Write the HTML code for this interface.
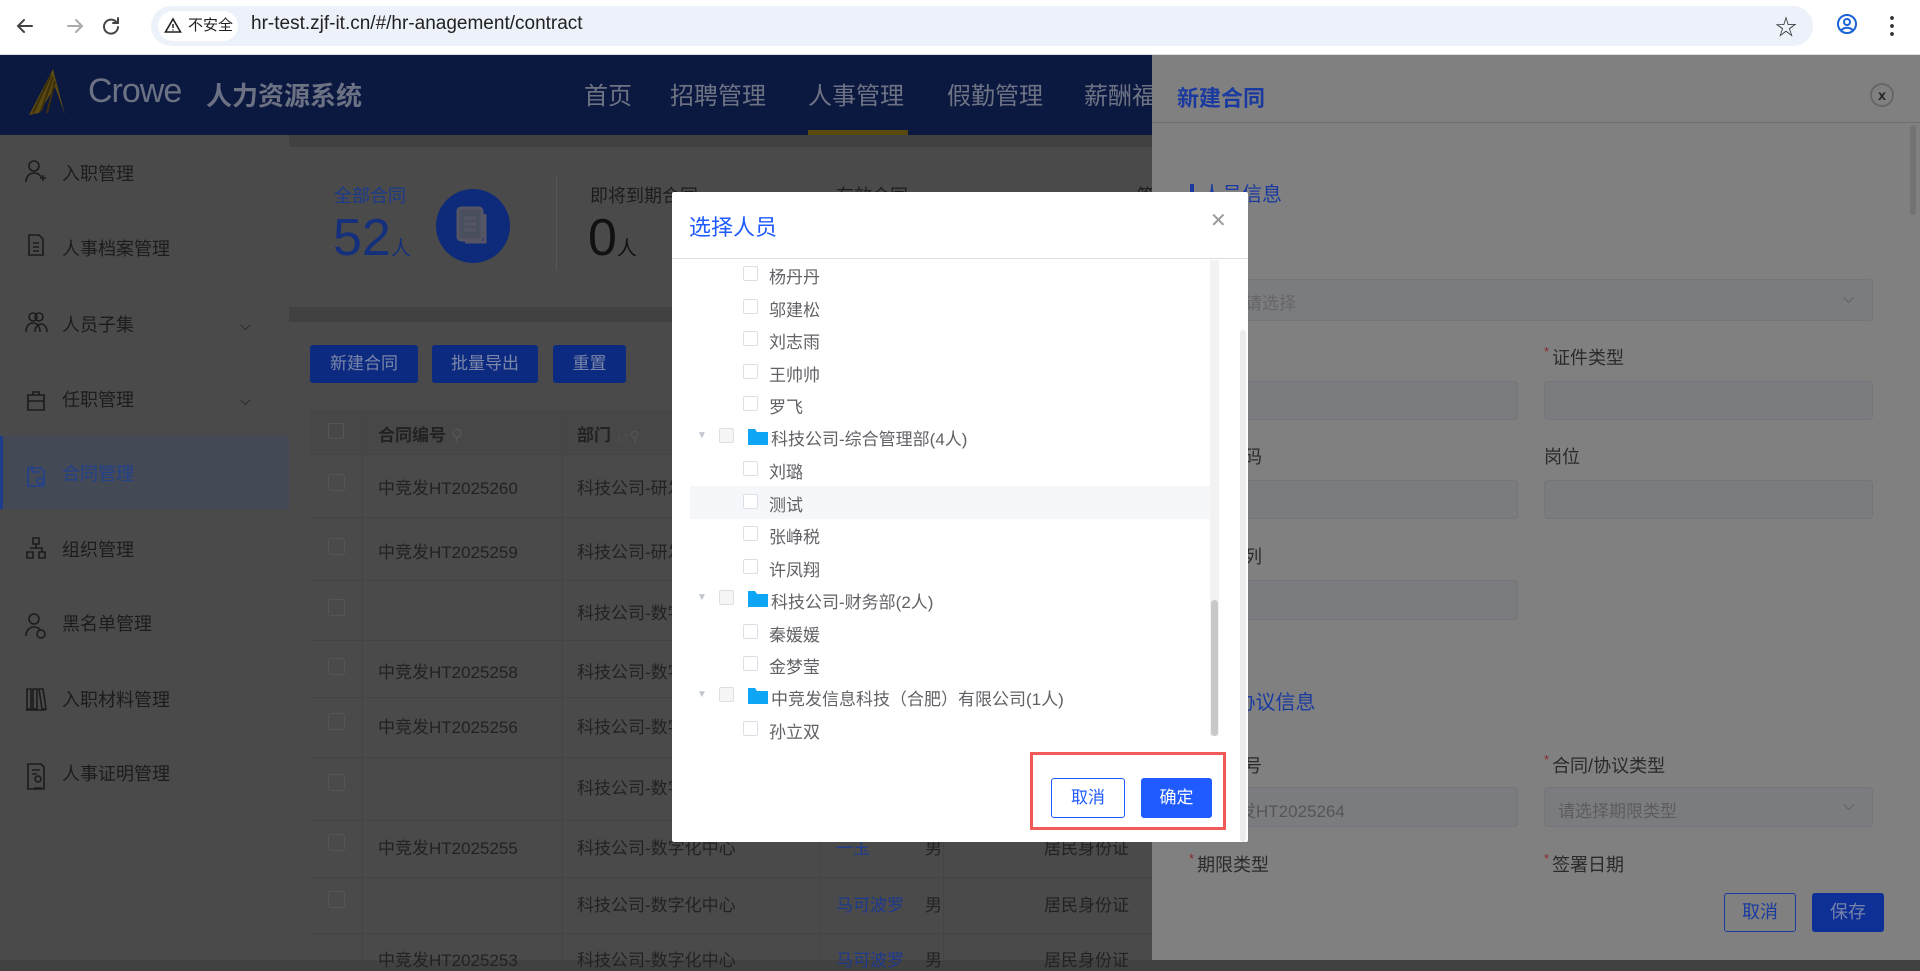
<!DOCTYPE html>
<html><head><meta charset="utf-8"><style>
*{margin:0;padding:0;box-sizing:border-box}
body{width:1920px;height:960px;overflow:hidden;position:relative;font-family:"Liberation Sans","Noto Sans CJK SC",sans-serif;background:#414141}
.a{position:absolute;white-space:nowrap}
.chrome{left:0;top:0;width:1920px;height:55px;background:#fff;border-bottom:1px solid #ddd}
.url{left:151px;top:6px;width:1662px;height:40px;background:#edf1f9;border-radius:20px}
.hdr{left:0;top:55px;width:1152px;height:80px;background:#0b1840}
.nav{top:76px;font-size:24px;color:#6e7384}
.side{left:0;top:135px;width:289px;height:825px;background:#4a4a4a}
.si{left:62px;font-size:18px;color:#1c1c1c}
.card{background:#4a4a4a}
.btn{top:345px;height:38px;background:#0c2a80;color:#7b86a8;font-size:17px;line-height:38px;text-align:center;border-radius:3px}
.td{font-size:17px;color:#222}
.rowl{left:310px;width:842px;height:1px;background:#444}
.drawer{left:1152px;top:55px;width:768px;height:905px;background:#808080}
.lbl{font-size:18px;color:#2a2a2a}
.inp{background:#7b7c7f;border:1px solid #747578;border-radius:4px}
.star{color:#8a2a2a;font-size:13px;margin-right:3px;vertical-align:top}
.dlg{left:672px;top:192px;width:576px;height:650px;background:#fff;border-radius:2px}
.tr{font-size:17px;color:#606266;left:97px}
.cb{width:15px;height:15px;border:1px solid #dcdfe6;border-radius:2px;background:#fff}
</style></head><body>
<div class="a chrome"></div>
<svg class="a" style="left:14px;top:14px" width="110" height="24" viewBox="0 0 110 24" fill="none" stroke-width="2" stroke-linecap="round">
<path d="M18 12H5M10 6L4 12l6 6" stroke="#444"/>
<path d="M54 12h13M62 6l6 6-6 6" stroke="#aaa"/>
<path d="M113 9a7 7 0 1 0 1 4" stroke="#444" transform="translate(-10,0)"/>
<path d="M104 4v5h-5" stroke="#444"/>
</svg>
<div class="a url"></div>
<div class="a" style="left:158px;top:11px;width:80px;height:30px;background:#fff;border-radius:15px;font-size:15px;color:#222;line-height:30px;padding-left:30px">不安全</div>
<svg class="a" style="left:164px;top:17px" width="18" height="17"><path d="M9 2L1.5 15h15z" fill="none" stroke="#222" stroke-width="1.6"/><path d="M9 7v4M9 12.5v1" stroke="#222" stroke-width="1.5"/></svg>
<div class="a" style="left:251px;top:13px;font-size:19px;color:#222">hr-test.zjf-it.cn/#/hr-anagement/contract</div>
<div class="a" style="left:1775px;top:10px;font-size:22px;color:#333">☆</div>
<svg class="a" style="left:1836px;top:13px" width="22" height="22"><circle cx="11" cy="11" r="9" fill="none" stroke="#1a62d8" stroke-width="2"/><circle cx="11" cy="9" r="3" fill="none" stroke="#1a62d8" stroke-width="2"/><path d="M5.5 17c3-3 8-3 11 0" stroke="#1a62d8" stroke-width="2" fill="none"/></svg>
<div class="a" style="left:1890px;top:14px;width:4px;height:22px;background:radial-gradient(circle,#333 1.8px,transparent 2px) 0 0/4px 8px"></div>

<div class="a hdr"></div>
<svg class="a" style="left:25px;top:67px" width="55" height="50"><path d="M28 2L40 48 30 20 14 46 4 48z" fill="#5a4a12"/><path d="M26 8L8 46M28 10L16 44M30 14L22 46" stroke="#3a2e0c" stroke-width="2"/></svg>
<div class="a" style="left:88px;top:72px;font-size:34px;color:#6c7284;letter-spacing:-1px">Crowe</div>
<div class="a" style="left:206px;top:76px;font-size:26px;font-weight:bold;color:#6c7284">人力资源系统</div>
<div class="a nav" style="left:584px">首页</div>
<div class="a nav" style="left:670px">招聘管理</div>
<div class="a nav" style="left:808px">人事管理</div>
<div class="a nav" style="left:947px">假勤管理</div>
<div class="a nav" style="left:1084px">薪酬福利</div>
<div class="a" style="left:808px;top:130px;width:100px;height:5px;background:#5a4a0e"></div>

<div class="a side"></div>
<div class="a" style="left:0;top:436px;width:289px;height:73px;background:#444a55"></div>
<div class="a" style="left:0;top:436px;width:3px;height:73px;background:#1e3c8c"></div>
<div class="a si" style="top:160px">入职管理</div>
<div class="a si" style="top:235px">人事档案管理</div>
<div class="a si" style="top:311px">人员子集</div>
<div class="a si" style="top:386px">任职管理</div>
<div class="a si" style="top:460px;color:#22418e">合同管理</div>
<div class="a si" style="top:536px">组织管理</div>
<div class="a si" style="top:610px">黑名单管理</div>
<div class="a si" style="top:686px">入职材料管理</div>
<div class="a si" style="top:760px">人事证明管理</div>
<svg class="a" style="left:24px;top:158px" width="26" height="640" fill="none" stroke="#1c1c1c" stroke-width="1.6">
<circle cx="10" cy="8" r="5"/><path d="M2 24c0-6 4-9 8-9s6 2 7 4M16 20h6M19 17v6"/>
<path d="M5 80h10l4 4v16H5z M9 88h6M9 92h6M9 96h6" transform="translate(0,-3)"/>
<circle cx="9" cy="159" r="4"/><circle cx="15" cy="159" r="4"/><path d="M2 174c0-6 3-9 7-9s7 3 7 9M11 174c0-5 3-8 6-8s6 3 6 8"/>
<path d="M4 237h16v15H4zM9 237v-3h6v3M4 243h16"/>
<path d="M4 310h13l3 3v15H4zM8 308v6h8" stroke="#22418e"/><circle cx="16" cy="323" r="3" stroke="#22418e"/>
<path d="M9 380h6v6H9zM3 394h6v6H3zM15 394h6v6h-6zM12 386v4M6 390h12v4"/>
<circle cx="10" cy="461" r="5"/><path d="M2 478c0-6 4-9 8-9s6 2 6 4"/><circle cx="17" cy="476" r="4"/>
<path d="M3 531h4v20H3zM9 531h4v20H9zM15 531l4 0 3 20h-4zM2 552h20"/>
<path d="M4 606h13l3 3v22H4zM8 612h8M8 616h5"/><circle cx="14" cy="621" r="3"/><path d="M10 630l8 0"/>
</svg>
<div class="a" style="left:240px;top:317px;font-size:14px;color:#1c1c1c">⌵</div>
<div class="a" style="left:240px;top:392px;font-size:14px;color:#1c1c1c">⌵</div>

<div class="a card" style="left:289px;top:147px;width:863px;height:160px"></div>
<div class="a" style="left:334px;top:182px;font-size:18px;color:#1c3a8c">全部合同</div>
<div class="a" style="left:333px;top:208px;font-size:52px;color:#14307c">52<span style="font-size:20px">人</span></div>
<div class="a" style="left:436px;top:189px;width:74px;height:74px;border-radius:50%;background:#0e2a7a"></div>
<svg class="a" style="left:455px;top:206px" width="36" height="40" fill="none" stroke="#556" stroke-width="3"><rect x="3" y="2" width="24" height="32" rx="3" fill="#4a4f60"/><path d="M9 12h12M9 18h12M9 24h12"/><path d="M30 8v28H10"/></svg>
<div class="a" style="left:556px;top:175px;width:1px;height:95px;background:#555"></div>
<div class="a" style="left:590px;top:182px;font-size:18px;color:#1c1c1c">即将到期合同</div>
<div class="a" style="left:588px;top:208px;font-size:52px;color:#111">0<span style="font-size:20px">人</span></div>
<div class="a" style="left:836px;top:182px;font-size:18px;color:#1c1c1c">有效合同</div>
<div class="a" style="left:1137px;top:182px;font-size:18px;color:#1c1c1c">签</div>

<div class="a card" style="left:289px;top:322px;width:863px;height:638px"></div>
<div class="a btn" style="left:310px;width:108px">新建合同</div>
<div class="a btn" style="left:432px;width:106px">批量导出</div>
<div class="a btn" style="left:553px;width:73px">重置</div>
<div class="a" style="left:310px;top:410px;width:842px;height:44px;background:#474747"></div>
<div class="a td" style="left:378px;top:421px;font-weight:bold">合同编号 <span style="font-weight:normal;color:#555">⚲</span></div>
<div class="a td" style="left:577px;top:421px;font-weight:bold">部门 <span style="font-weight:normal;color:#555;font-size:14px">↓↑⚲</span></div>
<div style="position:absolute;left:362px;top:410px;width:1px;height:550px;background:#444"></div>
<div style="position:absolute;left:562px;top:410px;width:1px;height:550px;background:#444"></div>
<div style="position:absolute;left:819px;top:410px;width:1px;height:550px;background:#444"></div>
<div style="position:absolute;left:943px;top:410px;width:1px;height:550px;background:#444"></div>
<div class="a" style="left:328px;top:423px;width:16px;height:16px;border:1px solid #555;border-radius:2px"></div>
<div class="a rowl" style="top:454px"></div>
<div class="a rowl" style="top:517px"></div>
<div class="a rowl" style="top:580px"></div>
<div class="a rowl" style="top:640px"></div>
<div class="a rowl" style="top:697px"></div>
<div class="a rowl" style="top:757px"></div>
<div class="a rowl" style="top:820px"></div>
<div class="a rowl" style="top:877px"></div>
<div class="a rowl" style="top:933px"></div>
<div class="a td" style="left:378px;top:474px">中竞发HT2025260</div><div class="a td" style="left:577px;top:474px">科技公司-研发中心</div>
<div class="a td" style="left:378px;top:538px">中竞发HT2025259</div><div class="a td" style="left:577px;top:538px">科技公司-研发中心</div>
<div class="a td" style="left:577px;top:599px">科技公司-数字化中心</div>
<div class="a td" style="left:378px;top:658px">中竞发HT2025258</div><div class="a td" style="left:577px;top:658px">科技公司-数字化中心</div>
<div class="a td" style="left:378px;top:713px">中竞发HT2025256</div><div class="a td" style="left:577px;top:713px">科技公司-数字化中心</div>
<div class="a td" style="left:577px;top:774px">科技公司-数字化中心</div>
<div class="a td" style="left:378px;top:834px">中竞发HT2025255</div><div class="a td" style="left:577px;top:834px">科技公司-数字化中心</div><div class="a td" style="left:836px;top:834px;color:#1e3a8e">一玉</div><div class="a td" style="left:925px;top:834px">男</div><div class="a td" style="left:1044px;top:834px">居民身份证</div>
<div class="a td" style="left:577px;top:891px">科技公司-数字化中心</div><div class="a td" style="left:836px;top:891px;color:#1e3a8e">马可波罗</div><div class="a td" style="left:925px;top:891px">男</div><div class="a td" style="left:1044px;top:891px">居民身份证</div>
<div class="a td" style="left:378px;top:946px">中竞发HT2025253</div><div class="a td" style="left:577px;top:946px">科技公司-数字化中心</div><div class="a td" style="left:836px;top:946px;color:#1e3a8e">马可波罗</div><div class="a td" style="left:925px;top:946px">男</div><div class="a td" style="left:1044px;top:946px">居民身份证</div>
<svg class="a" style="left:328px;top:474px" width="18" height="490" fill="none" stroke="#555"><rect x="0.5" y="0.5" width="16" height="16" rx="2"/><rect x="0.5" y="64.5" width="16" height="16" rx="2"/><rect x="0.5" y="125.5" width="16" height="16" rx="2"/><rect x="0.5" y="184.5" width="16" height="16" rx="2"/><rect x="0.5" y="239.5" width="16" height="16" rx="2"/><rect x="0.5" y="300.5" width="16" height="16" rx="2"/><rect x="0.5" y="360.5" width="16" height="16" rx="2"/><rect x="0.5" y="417.5" width="16" height="16" rx="2"/></svg>

<div class="a drawer"></div>
<div class="a" style="left:1152px;top:122px;width:768px;height:1px;background:#6f6f6f"></div>
<div class="a" style="left:1177px;top:81px;font-size:22px;font-weight:bold;color:#1a3aa0">新建合同</div>
<div class="a" style="left:1870px;top:83px;width:24px;height:24px;border:2px solid #666;border-radius:50%;font-size:14px;line-height:20px;text-align:center;color:#222;font-weight:bold">x</div>
<div class="a" style="left:1910px;top:125px;width:6px;height:90px;background:#737373;border-radius:3px"></div>
<div class="a" style="left:1190px;top:184px;width:4px;height:18px;background:#1a3aa0"></div>
<div class="a" style="left:1202px;top:178px;font-size:20px;color:#1a3aa0">人员信息</div>
<div class="a inp" style="left:1190px;top:279px;width:683px;height:42px"></div>
<div class="a" style="left:1245px;top:289px;font-size:17px;color:#666">请选择</div>
<div class="a" style="left:1843px;top:290px;font-size:15px;color:#555">⌵</div>
<div class="a lbl" style="left:1190px;top:344px"><span class="star">*</span>姓名</div>
<div class="a lbl" style="left:1544px;top:344px"><span class="star">*</span>证件类型</div>
<div class="a inp" style="left:1190px;top:381px;width:328px;height:39px"></div>
<div class="a inp" style="left:1544px;top:381px;width:329px;height:39px"></div>
<div class="a lbl" style="left:1190px;top:443px">证件号码</div>
<div class="a lbl" style="left:1544px;top:443px">岗位</div>
<div class="a inp" style="left:1190px;top:480px;width:328px;height:39px"></div>
<div class="a inp" style="left:1544px;top:480px;width:329px;height:39px"></div>
<div class="a lbl" style="left:1190px;top:543px">职级序列</div>
<div class="a inp" style="left:1190px;top:580px;width:328px;height:40px"></div>
<div class="a" style="left:1190px;top:686px;font-size:20px;color:#1a3aa0">合同/协议信息</div>
<div class="a lbl" style="left:1190px;top:752px">合同编号</div>
<div class="a lbl" style="left:1544px;top:752px"><span class="star">*</span>合同/协议类型</div>
<div class="a inp" style="left:1190px;top:787px;width:328px;height:40px"></div>
<div class="a" style="left:1205px;top:797px;font-size:17px;color:#555">中竞发HT2025264</div>
<div class="a inp" style="left:1544px;top:787px;width:329px;height:40px"></div>
<div class="a" style="left:1558px;top:797px;font-size:17px;color:#5c5c5c">请选择期限类型</div>
<div class="a" style="left:1843px;top:797px;font-size:15px;color:#555">⌵</div>
<div class="a lbl" style="left:1189px;top:851px"><span class="star">*</span>期限类型</div>
<div class="a lbl" style="left:1544px;top:851px"><span class="star">*</span>签署日期</div>
<div class="a" style="left:1724px;top:893px;width:72px;height:39px;border:1px solid #1a3aa0;border-radius:3px;color:#1a3aa0;font-size:18px;line-height:37px;text-align:center">取消</div>
<div class="a" style="left:1812px;top:893px;width:72px;height:39px;background:#0e2f96;border-radius:3px;color:#7682a8;font-size:18px;line-height:39px;text-align:center">保存</div>

<div class="a dlg">
 <div class="a" style="left:17px;top:18px;font-size:22px;color:#1f5bff">选择人员</div>
 <div class="a" style="left:538px;top:16px;font-size:20px;color:#999">✕</div>
 <div class="a" style="left:0;top:66px;width:576px;height:1px;background:#ddd"></div>
 <div class="a" style="left:568px;top:138px;width:6px;height:512px;background:#ececec;border-radius:3px"></div>
 <div class="a" style="left:538px;top:68px;width:9px;height:476px;background:#f2f2f2"></div>
 <div class="a" style="left:539px;top:408px;width:7px;height:136px;background:#c8c8c8;border-radius:4px"></div>
 <div class="a" style="left:18px;top:294px;width:520px;height:33px;background:#f5f7fa"></div>
 <div class="a" style="left:358px;top:560px;width:196px;height:78px;border:3px solid #f25a5a"></div>
 <div class="a" style="left:379px;top:586px;width:74px;height:40px;border:1px solid #1f5bff;border-radius:3px;color:#1f5bff;font-size:17px;line-height:38px;text-align:center">取消</div>
 <div class="a" style="left:469px;top:586px;width:71px;height:40px;background:#1f5bff;border-radius:3px;color:#fff;font-size:17px;line-height:40px;text-align:center">确定</div>
</div>
<div class="a" style="left:672px;top:192px;width:540px;height:560px;overflow:hidden">
<div class="a cb" style="left:71px;top:74px"></div><div class="a tr" style="top:71px">杨丹丹</div>
<div class="a cb" style="left:71px;top:107px"></div><div class="a tr" style="top:104px">邬建松</div>
<div class="a cb" style="left:71px;top:139px"></div><div class="a tr" style="top:136px">刘志雨</div>
<div class="a cb" style="left:71px;top:172px"></div><div class="a tr" style="top:169px">王帅帅</div>
<div class="a cb" style="left:71px;top:204px"></div><div class="a tr" style="top:201px">罗飞</div>
<div class="a" style="left:25px;top:238px;font-size:10px;color:#c0c4cc">▼</div><div class="a cb" style="left:47px;top:236px;background:#f5f5f5"></div><svg class="a" style="left:76px;top:236px" width="20" height="17"><path d="M0 1h7l2 3h11v13H0z" fill="#0ea5f5"/></svg><div class="a tr" style="left:99px;top:233px">科技公司-综合管理部(4人)</div>
<div class="a cb" style="left:71px;top:269px"></div><div class="a tr" style="top:266px">刘璐</div>
<div class="a cb" style="left:71px;top:302px"></div><div class="a tr" style="top:299px">测试</div>
<div class="a cb" style="left:71px;top:334px"></div><div class="a tr" style="top:331px">张峥税</div>
<div class="a cb" style="left:71px;top:367px"></div><div class="a tr" style="top:364px">许凤翔</div>
<div class="a" style="left:25px;top:400px;font-size:10px;color:#c0c4cc">▼</div><div class="a cb" style="left:47px;top:398px;background:#f5f5f5"></div><svg class="a" style="left:76px;top:398px" width="20" height="17"><path d="M0 1h7l2 3h11v13H0z" fill="#0ea5f5"/></svg><div class="a tr" style="left:99px;top:396px">科技公司-财务部(2人)</div>
<div class="a cb" style="left:71px;top:432px"></div><div class="a tr" style="top:429px">秦媛媛</div>
<div class="a cb" style="left:71px;top:464px"></div><div class="a tr" style="top:461px">金梦莹</div>
<div class="a" style="left:25px;top:497px;font-size:10px;color:#c0c4cc">▼</div><div class="a cb" style="left:47px;top:495px;background:#f5f5f5"></div><svg class="a" style="left:76px;top:495px" width="20" height="17"><path d="M0 1h7l2 3h11v13H0z" fill="#0ea5f5"/></svg><div class="a tr" style="left:99px;top:493px">中竞发信息科技（合肥）有限公司(1人)</div>
<div class="a cb" style="left:71px;top:529px"></div><div class="a tr" style="top:526px">孙立双</div>
</div>
</body></html>
